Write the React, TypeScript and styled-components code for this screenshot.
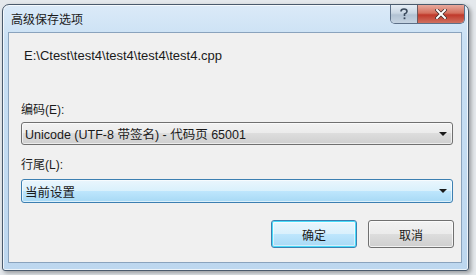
import React from 'react';
import styled, { createGlobalStyle } from 'styled-components';

const GlobalStyle = createGlobalStyle`
  html, body {
    margin: 0;
    padding: 0;
    background: #e4e8ec;
    width: 476px;
    height: 275px;
    overflow: hidden;
  }
`;

const uiFont = `"Liberation Sans", "Noto Sans CJK SC", sans-serif`;

const Window = styled.div`
  margin: 4px 0 0 2px;
  width: 467px;
  height: 267px;
  box-sizing: border-box;
  border: 1px solid #4a5a6c;
  border-radius: 7px 7px 3px 3px;
  background: linear-gradient(to bottom, #dbeaf8 0%, #c9e0f4 14%, #bdd7ef 100%);
  box-shadow: 2px 2px 4px rgba(0, 0, 0, 0.35), inset 0 0 0 1px rgba(255, 255, 255, 0.7);
  display: flex;
  flex-direction: column;
  font-family: ${uiFont};
`;

const TitleBar = styled.div`
  height: 27px;
  display: flex;
  align-items: flex-start;
  justify-content: space-between;
  padding: 0 3px 0 8px;
`;

const Title = styled.div`
  margin-top: 8px;
  font-size: 12px;
  line-height: 14px;
  color: #1a1a1a;
`;

const Caption = styled.div`
  display: flex;
  border: 1px solid #5d7088;
  border-top: none;
  border-radius: 0 0 5px 5px;
  overflow: hidden;
  height: 18px;
`;

const CaptionButton = styled.div<{ $close?: boolean }>`
  width: ${(p) => (p.$close ? 46 : 26)}px;
  display: flex;
  align-items: center;
  justify-content: center;
  background: ${(p) =>
    p.$close
      ? 'linear-gradient(to bottom, #e8a99d 0%, #d4705e 45%, #c0392b 55%, #d0705f 100%)'
      : 'linear-gradient(to bottom, #e6eef6 0%, #c9d6e3 45%, #b2c2d3 55%, #c6d4e2 100%)'};
  border-left: ${(p) => (p.$close ? '1px solid #6b5a60' : 'none')};
`;

const Content = styled.div`
  flex: 1;
  margin: 0 6px 7px 5px;
  border: 1px solid #8aa3bd;
  background: #f0f0f0;
  display: flex;
  flex-direction: column;
  padding: 0 7px 0 12px;
`;

const PathText = styled.div`
  margin-top: 15px;
  font-size: 13px;
  line-height: 16px;
  color: #1a1a1a;
  padding-left: 3px;
`;

const Label = styled.div<{ $top: number }>`
  margin-top: ${(p) => p.$top}px;
  font-size: 12px;
  line-height: 16px;
  color: #1a1a1a;
`;

const Select = styled.div<{ $focused?: boolean }>`
  margin-top: ${(p) => (p.$focused ? 6 : 4)}px;
  margin-right: 1px;
  height: ${(p) => (p.$focused ? 24 : 23)}px;
  box-sizing: border-box;
  border: 1px solid ${(p) => (p.$focused ? '#3c7fb1' : '#707070')};
  border-radius: 3px;
  background: ${(p) =>
    p.$focused
      ? 'linear-gradient(to bottom, #eaf6fd 0%, #d9f0fc 50%, #bee6fd 50%, #a7d9f5 100%)'
      : 'linear-gradient(to bottom, #f2f2f2 0%, #ebebeb 50%, #dddddd 50%, #cfcfcf 100%)'};
  box-shadow: inset 0 0 0 1px rgba(255, 255, 255, 0.6);
  display: flex;
  align-items: center;
  justify-content: space-between;
  padding: 0 5px 0 3px;
  font-size: 12.5px;
  color: #1a1a1a;
`;

const Arrow = styled.span`
  width: 0;
  height: 0;
  border-left: 4px solid transparent;
  border-right: 4px solid transparent;
  border-top: 4px solid #1a1a1a;
`;

const ButtonRow = styled.div`
  margin-top: 17px;
  display: flex;
  justify-content: flex-end;
  gap: 11px;
`;

const Button = styled.div<{ $default?: boolean }>`
  width: 86px;
  height: 28px;
  box-sizing: border-box;
  border: 1px solid ${(p) => (p.$default ? '#3c7fb1' : '#707070')};
  border-radius: 3px;
  background: ${(p) =>
    p.$default
      ? 'linear-gradient(to bottom, #eaf6fd 0%, #d9f0fc 50%, #bee6fd 50%, #a7d9f5 100%)'
      : 'linear-gradient(to bottom, #f2f2f2 0%, #ebebeb 50%, #dddddd 50%, #cfcfcf 100%)'};
  box-shadow: ${(p) =>
    p.$default
      ? 'inset 0 0 0 1px #48dbf9, inset 0 0 0 2px rgba(255,255,255,0.5)'
      : 'inset 0 0 0 1px rgba(255, 255, 255, 0.7)'};
  display: flex;
  align-items: center;
  justify-content: center;
  font-size: 12px;
  color: #1a1a1a;
`;

const App = () => {
  return (
    <>
      <GlobalStyle />
      <Window>
        <TitleBar>
          <Title>高级保存选项</Title>
          <Caption>
            <CaptionButton>
              <svg width="10" height="12" viewBox="0 0 10 12">
                <path
                  d="M2 3.5 Q2 1 5 1 Q8 1 8 3.5 Q8 5 5.5 6 L5.5 8"
                  fill="none"
                  stroke="#3b4a5c"
                  strokeWidth="1.6"
                />
                <rect x="4.6" y="9.4" width="1.8" height="1.8" fill="#3b4a5c" />
              </svg>
            </CaptionButton>
            <CaptionButton $close>
              <svg width="12" height="10" viewBox="0 0 12 10">
                <path
                  d="M2 1 L10 9 M10 1 L2 9"
                  stroke="#3d2a2a"
                  strokeWidth="3.4"
                  strokeLinecap="square"
                />
                <path
                  d="M2 1 L10 9 M10 1 L2 9"
                  stroke="#ffffff"
                  strokeWidth="2"
                  strokeLinecap="square"
                />
              </svg>
            </CaptionButton>
          </Caption>
        </TitleBar>
        <Content>
          <PathText>E:\Ctest\test4\test4\test4\test4.cpp</PathText>
          <Label $top={38}>编码(E):</Label>
          <Select>
            <span>Unicode (UTF-8 带签名) - 代码页 65001</span>
            <Arrow />
          </Select>
          <Label $top={12}>行尾(L):</Label>
          <Select $focused>
            <span>当前设置</span>
            <Arrow />
          </Select>
          <ButtonRow>
            <Button $default>确定</Button>
            <Button>取消</Button>
          </ButtonRow>
        </Content>
      </Window>
    </>
  );
};

export default App;
